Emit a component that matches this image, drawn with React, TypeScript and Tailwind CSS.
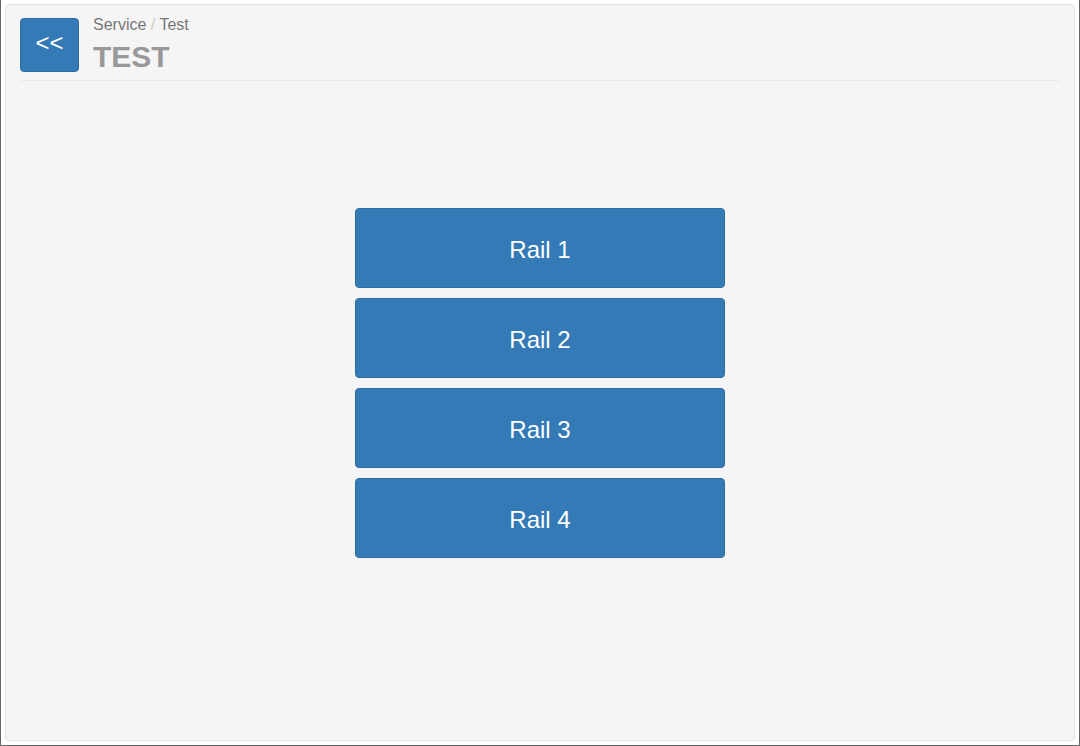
const rails = ["Rail 1", "Rail 2", "Rail 3", "Rail 4"]

export default function App() {
  return (
    <div
      className="w-[1080px] h-[746px] bg-white border-x border-b border-[#666] pt-[4px] px-[4px] pb-[4px]"
      style={{ fontFamily: '"Liberation Sans", Arial, sans-serif' }}
    >
      <div className="h-full bg-[#f5f5f5] border border-[#e3e3e3] rounded-[4px] px-[14px] pt-[13px]">
        {/* header */}
        <div className="flex items-start gap-[14px] pb-[8px] border-b border-[#eaeaea]">
          <button className="w-[59px] h-[54px] bg-[#337ab7] border border-[#2e6da4] rounded-[4px] text-white text-[24px] leading-none flex items-center justify-center pb-[4px]">
            &lt;&lt;
          </button>
          <div className="flex flex-col">
            <div className="text-[16px] leading-[18px] text-[#777] mt-[-2px]">
              Service <span className="text-[#ccc]">/</span> Test
            </div>
            <h1 className="text-[30px] leading-[30px] font-bold text-[#999] mt-[8px]">TEST</h1>
          </div>
        </div>

        {/* rails */}
        <div className="flex flex-col items-center gap-[10px] mt-[127px]">
          {rails.map((r) => (
            <button
              key={r}
              className="w-[370px] h-[80px] bg-[#337ab7] border border-[#2e6da4] rounded-[4px] text-white text-[24px] pt-[3px]"
            >
              {r}
            </button>
          ))}
        </div>
      </div>
    </div>
  )
}
